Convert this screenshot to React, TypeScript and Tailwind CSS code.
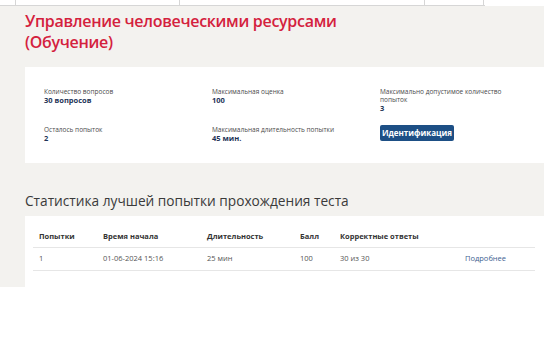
import React from 'react'

const font = { fontFamily: '"Open Sans", "Noto Sans", sans-serif' }

type Stat = { label: string; value?: string }

const StatItem: React.FC<Stat> = ({ label, value }) => (
  <div className="flex flex-col">
    <span className="text-[6.5px] leading-[8px] text-[#4a4a4a]">{label}</span>
    {value && <span className="text-[7.5px] font-bold leading-[8px] text-[#1e3457]">{value}</span>}
  </div>
)

const columns = [
  { title: 'Попытки', w: 'w-[64px]' },
  { title: 'Время начала', w: 'w-[104px]' },
  { title: 'Длительность', w: 'w-[93px]' },
  { title: 'Балл', w: 'w-[40px]' },
  { title: 'Корректные ответы', w: 'w-[125px]' },
  { title: '', w: 'flex-1' },
]

const row = ['1', '01-06-2024 15:16', '25 мин', '100', '30 из 30']

export default function App() {
  return (
    <div className="h-[363px] w-[559px] overflow-hidden bg-white" style={font}>
      {/* cropped table above */}
      <div className="flex h-[6px] w-[485px] border-b border-[#d6d6d6]">
        <div className="w-[16px] border-r border-[#d6d6d6]" />
        <div className="w-[164px] border-r border-[#d6d6d6]" />
        <div className="w-[245px] border-r border-[#d6d6d6]" />
        <div className="w-[59px] border-r border-[#d6d6d6]" />
      </div>

      <div className="h-[281px] w-[544px] overflow-hidden bg-[#f3f2ef] pl-[25px] pt-[5px]">
        <h1 className="text-[16px] font-semibold leading-[21px] tracking-[-0.3px] text-[#d4213d]">
          Управление человеческими ресурсами
          <br />
          (Обучение)
        </h1>

        <div className="mt-[14px] grid grid-cols-[168px_168px_1fr] gap-y-[13px] bg-white pb-[21px] pl-[19px] pt-[21px]">
          <StatItem label="Количество вопросов" value="30 вопросов" />
          <StatItem label="Максимальная оценка" value="100" />
          <div className="flex flex-col">
            <span className="w-[140px] text-[6.5px] leading-[8px] text-[#4a4a4a]">
              Максимально допустимое количество попыток
            </span>
            <span className="text-[7.5px] font-bold leading-[8px] text-[#1e3457]">3</span>
          </div>
          <div className="pt-[1px]">
            <StatItem label="Осталось попыток" value="2" />
          </div>
          <div className="pt-[1px]">
            <StatItem label="Максимальная длительность попытки" value="45 мин." />
          </div>
          <div>
            <button
              type="button"
              className="flex h-[16px] w-[74px] items-center justify-center rounded-[2px] bg-[#1d4f85] text-[8px] font-bold text-white"
            >
              Идентификация
            </button>
          </div>
        </div>

        <h2 className="mt-[28px] text-[13.7px] leading-[20px] text-[#3a3a3a]">
          Статистика лучшей попытки прохождения теста
        </h2>

        <div className="mt-[5px] h-[100px] bg-white pl-[8px] pr-[9px] pt-[11px]">
          <div className="flex h-[21px] items-center border-b border-[#e6e6e6]">
            {columns.map((c) => (
              <div key={c.title || 'x'} className={`${c.w} pl-[6px] text-[7.5px] font-bold text-[#333]`}>
                {c.title}
              </div>
            ))}
          </div>
          <div className="flex h-[23px] items-center border-b border-[#e6e6e6]">
            {row.map((v, i) => (
              <div key={i} className={`${columns[i].w} pl-[6px] text-[7.5px] text-[#555]`}>
                {v}
              </div>
            ))}
            <div className="flex-1 pl-[6px] text-[7.5px] text-[#3d6190]">Подробнее</div>
          </div>
        </div>
      </div>
    </div>
  )
}
